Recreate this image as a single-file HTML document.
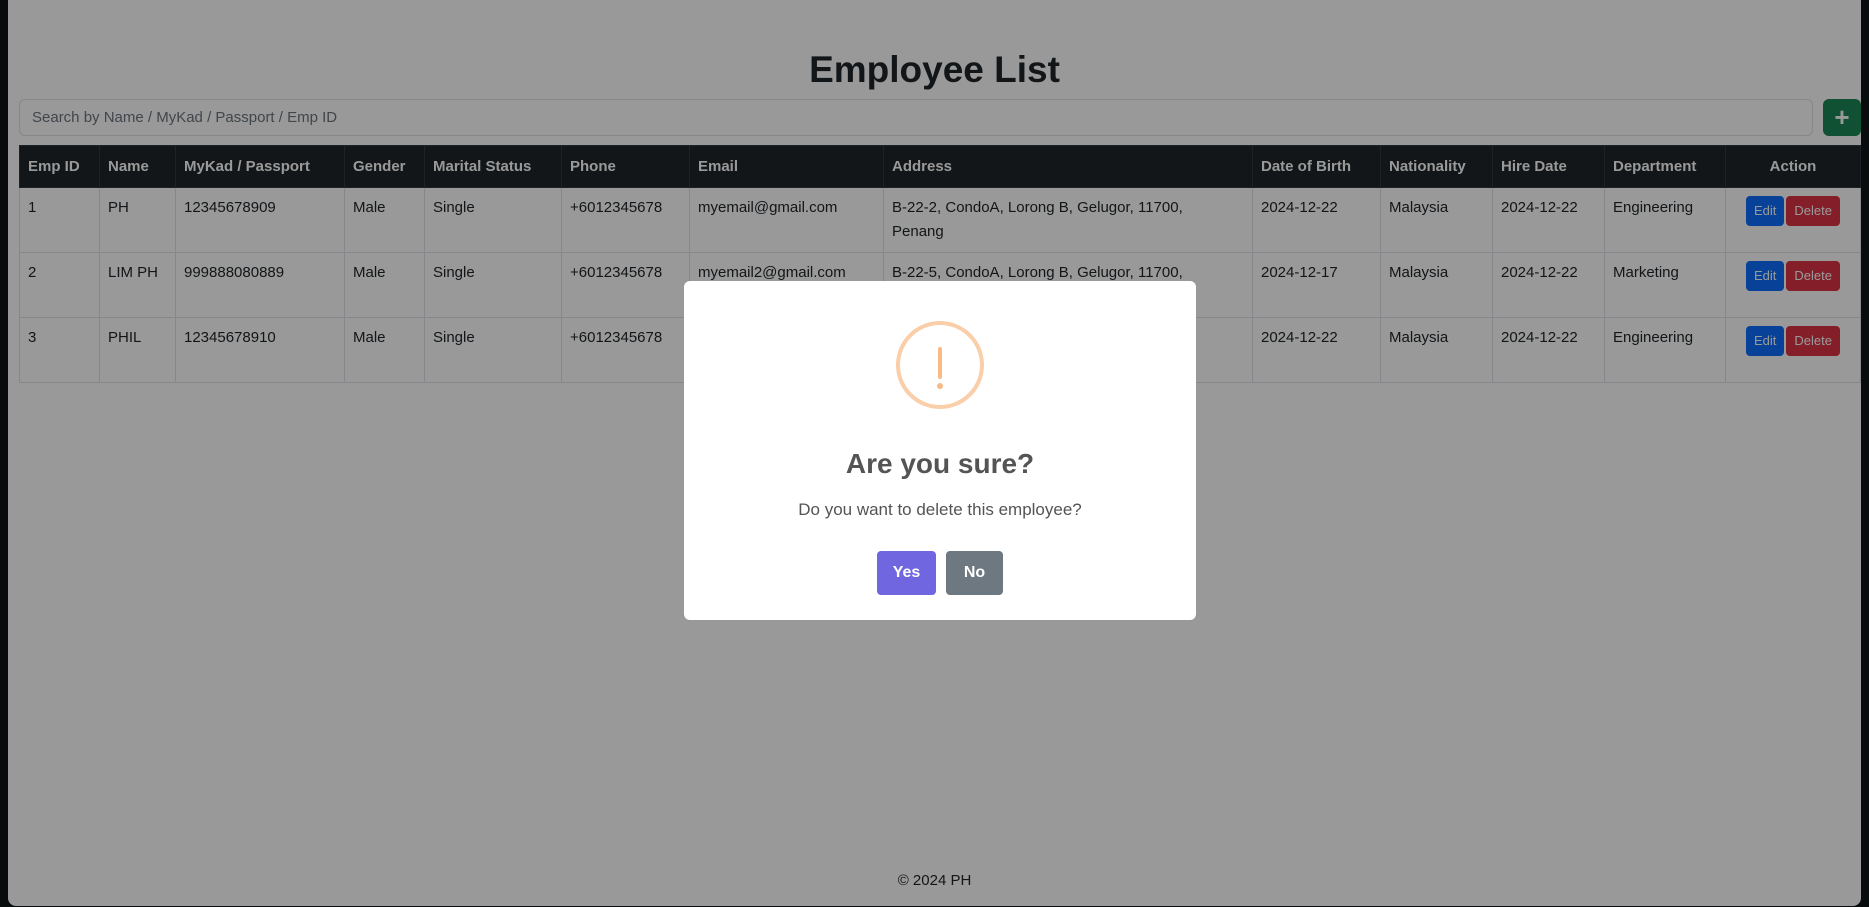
<!DOCTYPE html>
<html><head><meta charset="utf-8"><style>
*{box-sizing:border-box;margin:0;padding:0}
html,body{width:1869px;height:907px;overflow:hidden;background:#0e1515;font-family:"Liberation Sans",sans-serif;color:#212529}
#page{position:absolute;left:8px;top:0;width:1853px;height:906px;background:#fff;border-radius:0 0 8px 8px;overflow:hidden}
h1{position:absolute;left:0;width:1853px;top:46px;text-align:center;font-size:37px;font-weight:bold;line-height:48px}
.search{position:absolute;left:11px;top:99px;width:1794px;height:37px;border:1px solid #dee2e6;border-radius:6px;font-size:15px;color:#6c757d;padding:9px 12px}
.plus{position:absolute;left:1815px;top:99px;width:38px;height:37px;background:#198754;border-radius:6px;color:#fff;font-size:26px;font-weight:bold;text-align:center;line-height:36px}
table{position:absolute;left:11px;top:145px;width:1841px;border-collapse:collapse;table-layout:fixed;font-size:15px}
th,td{border:1px solid #dee2e6;padding:8px;text-align:left;vertical-align:top;line-height:24px}
th{background:#212529;color:#fff;height:42px;border-color:#32383e;font-weight:bold;vertical-align:middle;padding:8px}
td{height:65px}
.b{display:inline-block;color:#fff;font-size:13px;border-radius:4px;height:30px;line-height:30px;padding:0 8px}
.e{background:#0d6efd}.d{background:#dc3545;margin-left:2px}
.foot{position:absolute;left:0;width:1853px;top:872px;text-align:center;font-size:15px}
#ov{position:absolute;left:0;top:0;width:1869px;height:907px;background:rgba(0,0,0,0.4)}
#modal{position:absolute;left:684px;top:281px;width:512px;height:339px;background:#fff;border-radius:6px;text-align:center}
.icon{position:absolute;left:212px;top:40px;width:88px;height:88px;border:4px solid #facea8;border-radius:50%}
.icon .bar{position:absolute;left:38px;top:22px;width:4px;height:32px;background:#f8bb86;border-radius:2px}
.icon .dot{position:absolute;left:37px;top:58px;width:6px;height:6px;background:#f8bb86;border-radius:50%}
.t{position:absolute;left:0;width:512px;top:167px;font-size:28px;font-weight:bold;color:#545454}
.m{position:absolute;left:0;width:512px;top:219px;font-size:17px;color:#545454}
.yes,.no{position:absolute;top:270px;height:44px;color:#fff;font-weight:bold;font-size:16px;line-height:44px;border-radius:4px}
.yes{left:193px;width:59px;background:#7066e0}
.no{left:262px;width:57px;background:#6e7881}
</style></head><body>
<div id="page">
<h1>Employee List</h1>
<div class="search">Search by Name / MyKad / Passport / Emp ID</div>
<div class="plus">+</div>
<table>
<colgroup><col style="width:80px"><col style="width:76px"><col style="width:169px"><col style="width:80px"><col style="width:137px"><col style="width:128px"><col style="width:194px"><col style="width:369px"><col style="width:128px"><col style="width:112px"><col style="width:112px"><col style="width:121px"><col style="width:135px"></colgroup>
<tr><th>Emp ID</th><th>Name</th><th>MyKad / Passport</th><th>Gender</th><th>Marital Status</th><th>Phone</th><th>Email</th><th>Address</th><th>Date of Birth</th><th>Nationality</th><th>Hire Date</th><th>Department</th><th style="text-align:center">Action</th></tr>
<tr><td>1</td><td>PH</td><td>12345678909</td><td>Male</td><td>Single</td><td>+6012345678</td><td>myemail@gmail.com</td><td>B-22-2, CondoA, Lorong B, Gelugor, 11700,<br>Penang</td><td>2024-12-22</td><td>Malaysia</td><td>2024-12-22</td><td>Engineering</td><td style="text-align:center"><span class="b e">Edit</span><span class="b d">Delete</span></td></tr>
<tr><td>2</td><td>LIM PH</td><td>999888080889</td><td>Male</td><td>Single</td><td>+6012345678</td><td>myemail2@gmail.com</td><td>B-22-5, CondoA, Lorong B, Gelugor, 11700,<br>Penang</td><td>2024-12-17</td><td>Malaysia</td><td>2024-12-22</td><td>Marketing</td><td style="text-align:center"><span class="b e">Edit</span><span class="b d">Delete</span></td></tr>
<tr><td>3</td><td>PHIL</td><td>12345678910</td><td>Male</td><td>Single</td><td>+6012345678</td><td>phil@gmail.com</td><td>B-22-3, CondoA, Lorong B, Gelugor, 11700,<br>Penang</td><td>2024-12-22</td><td>Malaysia</td><td>2024-12-22</td><td>Engineering</td><td style="text-align:center"><span class="b e">Edit</span><span class="b d">Delete</span></td></tr>
</table>
<div class="foot">© 2024 PH</div>
</div>
<div id="ov"></div>
<div id="modal">
<div class="icon"><div class="bar"></div><div class="dot"></div></div>
<div class="t">Are you sure?</div>
<div class="m">Do you want to delete this employee?</div>
<div class="yes">Yes</div><div class="no">No</div>
</div>
</body></html>
